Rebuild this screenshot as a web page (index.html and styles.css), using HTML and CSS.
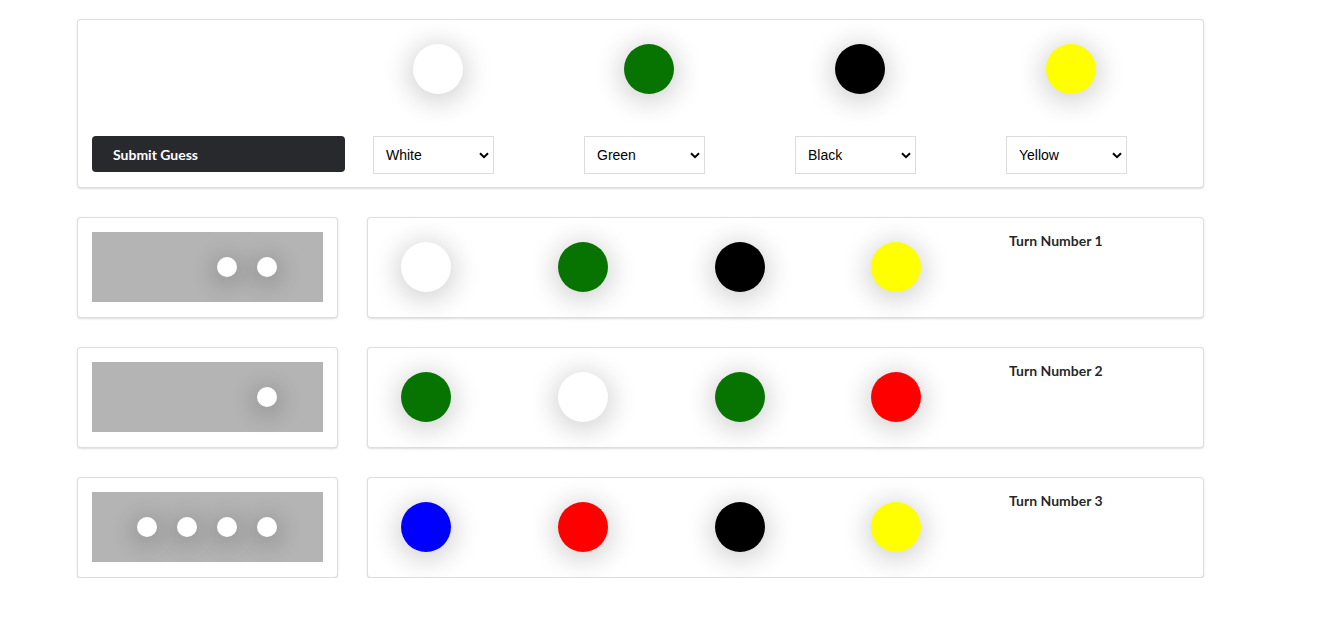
FILE: index.html
```html
<!DOCTYPE html>
<html>
<head>
<meta charset="utf-8">
<link rel="stylesheet" href="styles.css">
</head>
<body>
<div class="page">
  <div class="card board">
    <div class="cell"></div>
    <div class="cell"><span class="ball white"></span></div>
    <div class="cell"><span class="ball green"></span></div>
    <div class="cell"><span class="ball black"></span></div>
    <div class="cell"><span class="ball yellow"></span></div>
    <div class="cell"><button class="submit">Submit Guess</button></div>
    <div class="cell"><div class="select-wrap"><select><option selected>White</option><option>Green</option><option>Black</option><option>Yellow</option><option>Red</option><option>Blue</option></select><svg class="chev" viewBox="0 0 10 7" width="10" height="7"><path d="M1 1.2 L5 5.2 L9 1.2" fill="none" stroke="#000" stroke-width="2"/></svg></div></div>
    <div class="cell"><div class="select-wrap"><select><option>White</option><option selected>Green</option><option>Black</option><option>Yellow</option><option>Red</option><option>Blue</option></select><svg class="chev" viewBox="0 0 10 7" width="10" height="7"><path d="M1 1.2 L5 5.2 L9 1.2" fill="none" stroke="#000" stroke-width="2"/></svg></div></div>
    <div class="cell"><div class="select-wrap"><select><option>White</option><option>Green</option><option selected>Black</option><option>Yellow</option><option>Red</option><option>Blue</option></select><svg class="chev" viewBox="0 0 10 7" width="10" height="7"><path d="M1 1.2 L5 5.2 L9 1.2" fill="none" stroke="#000" stroke-width="2"/></svg></div></div>
    <div class="cell"><div class="select-wrap"><select><option>White</option><option>Green</option><option>Black</option><option selected>Yellow</option><option>Red</option><option>Blue</option></select><svg class="chev" viewBox="0 0 10 7" width="10" height="7"><path d="M1 1.2 L5 5.2 L9 1.2" fill="none" stroke="#000" stroke-width="2"/></svg></div></div>
  </div>

  <div class="turn">
    <div class="card result">
      <div class="pegbox">
        <span class="slot"></span><span class="slot"></span>
        <span class="slot"><span class="peg"></span></span><span class="slot"><span class="peg"></span></span>
      </div>
    </div>
    <div class="card guess">
      <div class="gcell"><span class="ball white"></span></div>
      <div class="gcell"><span class="ball green"></span></div>
      <div class="gcell"><span class="ball black"></span></div>
      <div class="gcell"><span class="ball yellow"></span></div>
      <div class="label">Turn Number 1</div>
    </div>
  </div>

  <div class="turn">
    <div class="card result">
      <div class="pegbox">
        <span class="slot"></span><span class="slot"></span><span class="slot"></span>
        <span class="slot"><span class="peg"></span></span>
      </div>
    </div>
    <div class="card guess">
      <div class="gcell"><span class="ball green"></span></div>
      <div class="gcell"><span class="ball white"></span></div>
      <div class="gcell"><span class="ball green"></span></div>
      <div class="gcell"><span class="ball red"></span></div>
      <div class="label">Turn Number 2</div>
    </div>
  </div>

  <div class="turn">
    <div class="card result">
      <div class="pegbox">
        <span class="slot"><span class="peg"></span></span><span class="slot"><span class="peg"></span></span>
        <span class="slot"><span class="peg"></span></span><span class="slot"><span class="peg"></span></span>
      </div>
    </div>
    <div class="card guess">
      <div class="gcell"><span class="ball blue"></span></div>
      <div class="gcell"><span class="ball red"></span></div>
      <div class="gcell"><span class="ball black"></span></div>
      <div class="gcell"><span class="ball yellow"></span></div>
      <div class="label">Turn Number 3</div>
    </div>
  </div>
</div>
</body>
</html>
```

FILE: styles.css
```css
* { box-sizing: border-box; }
html, body { margin: 0; background: #fff; }
body {
  font-family: Lato, "Noto Sans", sans-serif;
  font-size: 14px;
  line-height: 20px;
  color: rgba(0,0,0,.87);
}
.page {
  padding: 19px 0 0 77px;
  width: 1204px;
  display: flex;
  flex-direction: column;
  gap: 29px;
}
.card {
  background: #fff;
  border: 1px solid rgba(34,36,38,.15);
  border-radius: 4px;
  box-shadow: 0 1px 2px 0 rgba(34,36,38,.15);
  padding: 14px;
}
.board {
  width: 1127px;
  height: 169px;
  padding-bottom: 13px;
  display: grid;
  grid-template-columns: 281px repeat(4, 211px);
  grid-template-rows: 60px 38px;
  row-gap: 42px;
}
.board .cell:nth-child(-n+5) { padding: 10px 0 0 40px; }
.ball {
  display: block;
  width: 50px;
  height: 50px;
  border-radius: 50%;
  box-shadow: 0 4px 26px 5px rgba(0,0,0,.17);
}
.white { background: #fff; }
.green { background: #077300; }
.black { background: #000; }
.yellow { background: #ffff00; }
.red { background: #ff0000; }
.blue { background: #0000ff; }
.submit {
  display: block;
  width: 253px;
  height: 36px;
  border: 0;
  border-radius: 4px;
  background: #28292c;
  color: #fff;
  font-family: Lato, "Noto Sans", sans-serif;
  font-weight: 700;
  font-size: 14px;
  text-align: left;
  padding: 0 0 0 21px;
}
.select-wrap {
  position: relative;
  width: 121px;
  height: 38px;
}
.select-wrap select {
  appearance: none;
  -webkit-appearance: none;
  width: 121px;
  height: 38px;
  border: 1px solid #dcdcdc;
  border-radius: 0;
  background: #fff;
  font-family: "Liberation Sans", Arial, sans-serif;
  font-size: 14px;
  color: #000;
  padding: 0 0 0 12px;
  margin: 0;
}
.chev {
  position: absolute;
  right: 5px;
  top: 16px;
  pointer-events: none;
}
.turn {
  display: flex;
  gap: 29px;
  height: 101px;
}
.result {
  width: 261px;
  flex: none;
  padding: 14px 14px 15px;
}
.pegbox {
  height: 70px;
  background: #b4b4b4;
  display: flex;
  align-items: center;
  padding-left: 35px;
}
.slot {
  width: 40px;
  height: 20px;
  display: flex;
  justify-content: center;
}
.peg {
  width: 20px;
  height: 20px;
  border-radius: 50%;
  background: #fff;
  box-shadow: 0 4px 22px 6px rgba(0,0,0,.16);
}
.guess {
  width: 837px;
  flex: none;
  display: grid;
  grid-template-columns: repeat(4, 156.75px) 1fr;
}
.gcell { padding: 10px 0 0 19px; }
.label {
  font-weight: 700;
  margin-top: -1px;
}
```
